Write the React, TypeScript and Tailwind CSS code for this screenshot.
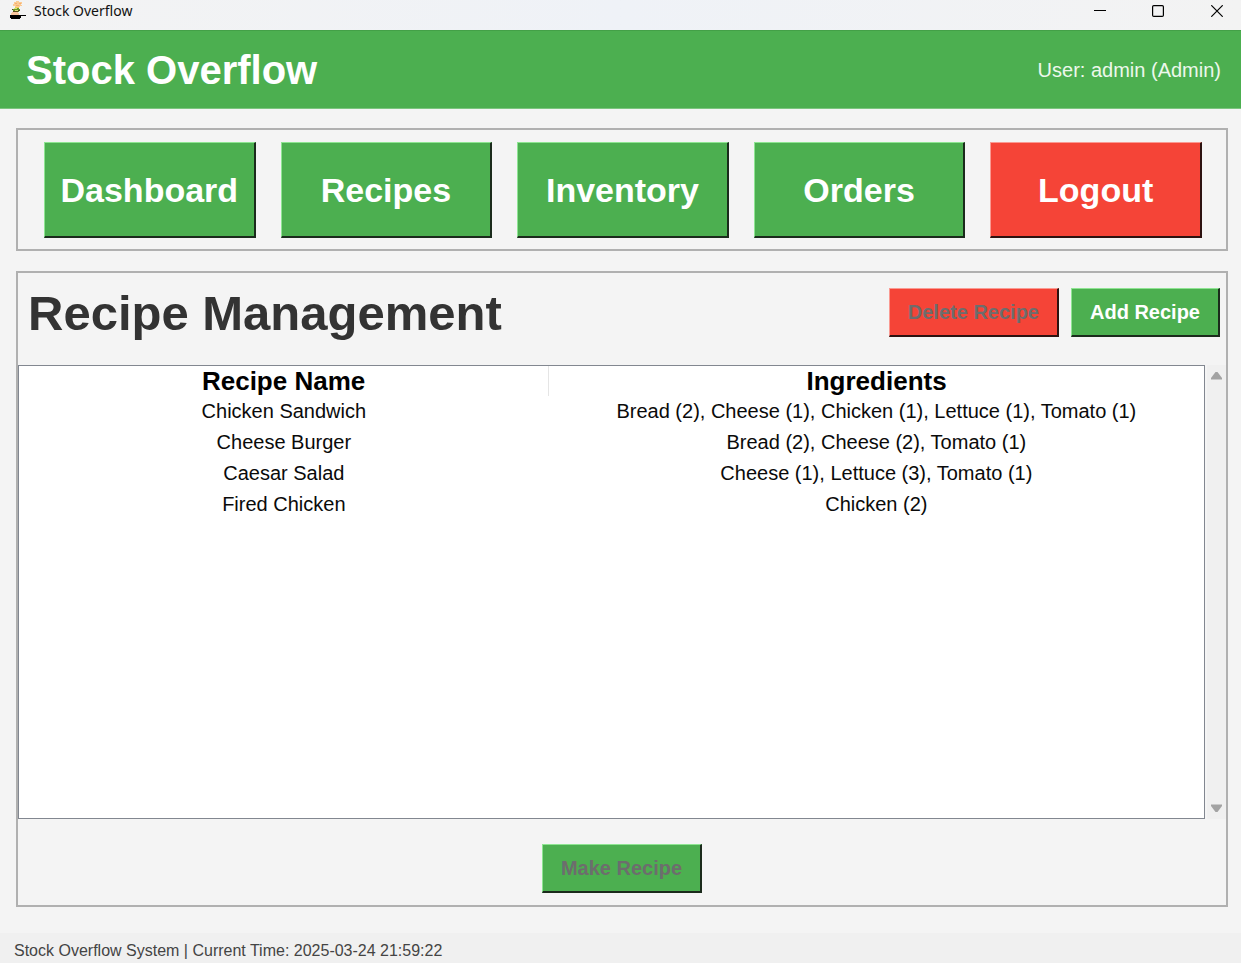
import type { ReactNode } from "react";

const recipes = [
  { name: "Chicken Sandwich", ingredients: "Bread (2), Cheese (1), Chicken (1), Lettuce (1), Tomato (1)" },
  { name: "Cheese Burger", ingredients: "Bread (2), Cheese (2), Tomato (1)" },
  { name: "Caesar Salad", ingredients: "Cheese (1), Lettuce (3), Tomato (1)" },
  { name: "Fired Chicken", ingredients: "Chicken (2)" },
];

const green =
  "bg-[#4caf50] border-t-[#8ee592] border-l-[#8ee592] border-r-[#1b2b1c] border-b-[#1b2b1c]";
const red =
  "bg-[#f54437] border-t-[#fa9a92] border-l-[#fa9a92] border-r-[#2d1210] border-b-[#2d1210]";

function NavButton({ tone, children }: { tone: string; children: ReactNode }) {
  return (
    <button
      type="button"
      className={`h-24 min-w-0 flex-1 border border-r-2 border-b-2 text-[34px] leading-10 font-bold text-white ${tone}`}
    >
      {children}
    </button>
  );
}

function ActionButton({ tone, disabled, children }: { tone: string; disabled?: boolean; children: ReactNode }) {
  return (
    <button
      type="button"
      disabled={disabled}
      className={`h-[49px] border border-r-2 border-b-2 px-[18px] text-xl leading-6 font-bold text-white disabled:text-[#6d6d6d] ${tone}`}
    >
      {children}
    </button>
  );
}

function AppIcon() {
  return (
    <svg width="16" height="18" viewBox="0 0 16 18" shapeRendering="crispEdges" aria-hidden="true">
      <path fill="#fbcb93" d="M4 1h2V0h3v1h3v2h-1v1h1v1h-2v1H5V5H3V3h1z" />
      <path fill="#f7ae72" d="M5 2h2v1H5zM9 2h2v1H9zM6 4h3v1H6z" />
      <path fill="#f0cf55" d="M5 6h4v1H5z" />
      <path fill="#6b9a2b" d="M2 8h2V7h5v1h1v2H9v1H3V9H2z" />
      <path fill="#d8e27a" d="M4 7h3v1H4zM5 9h3v1H5z" />
      <path fill="#5a4a20" d="M2 8h1v1H2zM8 9h2v1H8zM3 10h5v1H3z" />
      <path fill="#f9c7a0" d="M2 11h6v1h1v2H1v-2h1z" />
      <path fill="#000" d="M0 14h16v1h-5v2h-1v1H1v-1H0z" />
    </svg>
  );
}

function WindowControls() {
  return (
    <div className="flex text-black">
      <button type="button" aria-label="Minimize" className="flex h-[22px] w-[58px] items-center justify-center">
        <svg width="12" height="12" viewBox="0 0 12 12" stroke="currentColor" fill="none">
          <path d="M0 5.5h12" />
        </svg>
      </button>
      <button type="button" aria-label="Maximize" className="flex h-[22px] w-[58px] items-center justify-center">
        <svg width="12" height="12" viewBox="0 0 12 12" stroke="currentColor" fill="none">
          <rect x="0.6" y="0.6" width="10.8" height="10.8" rx="1.2" strokeWidth="1.2" />
        </svg>
      </button>
      <button type="button" aria-label="Close" className="flex h-[22px] w-[60px] items-center justify-center">
        <svg width="12" height="12" viewBox="0 0 12 12" stroke="currentColor" fill="none">
          <path d="M0.3 0.3l11.4 11.4M11.7 0.3L0.3 11.7" strokeWidth="1.2" />
        </svg>
      </button>
    </div>
  );
}

export default function App() {
  return (
    <div className="flex min-h-screen flex-col overflow-x-hidden bg-[#f4f4f4] font-['Liberation_Sans',Arial,sans-serif]">
      <div className="flex h-[30px] items-start justify-between bg-linear-to-r from-[#f3f3f3] via-[#eff2f7] to-[#f3f3f3] pl-[10px]">
        <div className="flex items-start gap-2">
          <div className="pt-px">
            <AppIcon />
          </div>
          <span className="font-['Noto_Sans',sans-serif] text-sm leading-[22px] text-[#111]">Stock Overflow</span>
        </div>
        <div className="-mr-[6px]">
          <WindowControls />
        </div>
      </div>

      <header className="flex h-[79px] items-center justify-between border-t border-b border-t-[#43a047] border-b-[#7cc57f] bg-[#4caf50] pr-5 pl-[26px]">
        <h1 className="text-[40px] leading-[48px] font-bold text-white">Stock Overflow</h1>
        <span className="text-xl leading-6 text-[#ecf8ec]">User: admin (Admin)</span>
      </header>

      <nav className="mt-[19px] mr-[13px] ml-4 flex gap-[25px] border-2 border-[#b0b0b0] pt-3 pr-6 pb-[11px] pl-[26px]">
        <NavButton tone={green}>Dashboard</NavButton>
        <NavButton tone={green}>Recipes</NavButton>
        <NavButton tone={green}>Inventory</NavButton>
        <NavButton tone={green}>Orders</NavButton>
        <NavButton tone={red}>Logout</NavButton>
      </nav>

      <main className="mt-5 mr-[13px] mb-[26px] ml-4 flex flex-1 flex-col border-2 border-[#b0b0b0]">
        <div className="flex items-start justify-between pt-[15px] pr-[6px] pb-[27px] pl-[10px]">
          <h2 className="text-[49px] leading-[50px] font-bold text-[#333]">Recipe Management</h2>
          <div className="flex gap-3">
            <ActionButton tone={red} disabled>
              Delete Recipe
            </ActionButton>
            <ActionButton tone={green}>Add Recipe</ActionButton>
          </div>
        </div>

        <div className="flex flex-1">
          <div className="flex-1 border border-[#828790] bg-white">
            <table className="w-full table-fixed border-collapse text-center text-[#0a0a0a]">
              <colgroup>
                <col className="w-[44.7%]" />
                <col />
              </colgroup>
              <thead>
                <tr className="h-[30px] text-[26px] leading-[30px] text-black">
                  <th scope="col" className="border-r border-[#e5e5e5] p-0 font-bold">
                    Recipe Name
                  </th>
                  <th scope="col" className="p-0 font-bold">
                    Ingredients
                  </th>
                </tr>
              </thead>
              <tbody>
                {recipes.map((recipe) => (
                  <tr key={recipe.name} className="h-[31px] text-xl leading-[31px]">
                    <td className="p-0">{recipe.name}</td>
                    <td className="p-0">{recipe.ingredients}</td>
                  </tr>
                ))}
              </tbody>
            </table>
          </div>
          <div className="ml-[2px] flex w-[19px] flex-col items-center justify-between bg-[#f0f0f0] py-[6px]">
            <svg width="11" height="9" viewBox="0 0 11 9" fill="#a3a3a3" aria-hidden="true">
              <path d="M4.5 1h2L11 7v1.5H0V7z" />
            </svg>
            <svg width="11" height="9" viewBox="0 0 11 9" fill="#a3a3a3" aria-hidden="true">
              <path d="M4.5 8h2L11 2V0.5H0V2z" />
            </svg>
          </div>
        </div>

        <div className="flex justify-center pt-[25px] pb-3">
          <ActionButton tone={green} disabled>
            Make Recipe
          </ActionButton>
        </div>
      </main>

      <footer className="h-[30px] bg-[#f0f0f0] px-[14px] pt-[6px] text-base leading-6 text-[#444]">
        Stock Overflow System | Current Time: 2025-03-24 21:59:22
      </footer>
    </div>
  );
}
